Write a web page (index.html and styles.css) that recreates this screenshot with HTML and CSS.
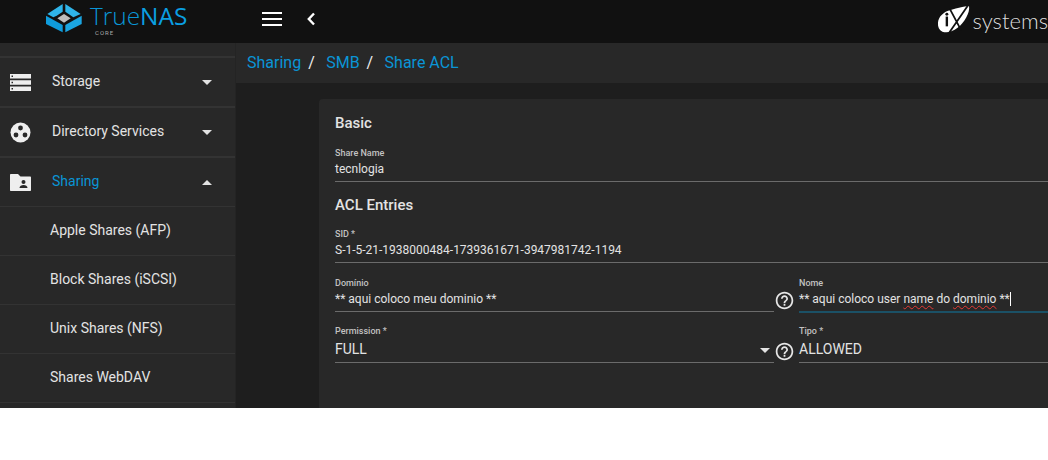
FILE: index.html
```html
<!DOCTYPE html>
<html lang="pt">
<head>
<meta charset="utf-8">
<title>TrueNAS</title>
<link rel="stylesheet" href="styles.css">
</head>
<body>
<div class="app">
  <header class="topbar">
    <div class="brand">
      <svg class="brand-mark" width="50" height="40" viewBox="0 0 150 120">
        <path fill="#2fb4e9" d="M22 42 68 12V35L50 47 40 52Z"/>
        <path fill="#2fb4e9" d="M76 12 122 42 100 52 76 35Z"/>
        <path fill="#0f9cdc" d="M18 47 68 75V97L18 72Z"/>
        <path fill="#1ba6e2" d="M125 47V72L76 97V75Z"/>
        <path fill="#bdbdbd" d="M72 42 92 55 72 68 52 55Z"/>
      </svg>
      <div class="brand-text">
        <div class="brand-name"><span class="brand-true">True</span><span class="brand-nas">NAS</span></div>
        <div class="brand-core">CORE</div>
      </div>
    </div>
    <div class="top-actions">
      <svg width="20" height="14" viewBox="0 0 20 14"><path fill="#fff" d="M0 0h20v2H0zM0 6h20v2H0zM0 12h20v2H0z"/></svg>
      <svg width="10" height="14" viewBox="0 0 10 14"><path fill="none" stroke="#fff" stroke-width="2.400" d="M8 1.500 2.800 7 8 12.500"/></svg>
    </div>
    <div class="ix">
      <svg width="40" height="36" viewBox="0 0 120 108">
        <path fill="#fff" d="M10 60C12 40 28 24 50 18L70 12C90 6 108 2 115 5 118 25 100 60 75 78 60 90 40 96 25 90 14 85 9 74 10 60Z"/>
        <circle cx="40" cy="31" r="5" fill="#111"/>
        <path fill="#111" d="M36 39h8v33h-8z"/>
        <path fill="none" stroke="#111" stroke-width="6" d="M50 13 88 85M110 3 46 96"/>
      </svg>
      <span class="ix-text">systems</span>
    </div>
  </header>
  <div class="main">
    <nav class="sidebar">
      <div class="nav-item">
        <svg class="nav-icon" width="21" height="17" viewBox="0 0 21 17"><path fill="#eee" d="M0 0h21v4.400H0zM0 6.300h21v4.400H0zM0 12.600h21V17H0z"/><path fill="#282828" d="M1.500 1.500h1.500v1.500H1.500zM1.500 7.800h1.500v1.500H1.500zM1.500 14.100h1.500v1.500H1.500z"/></svg>
        <span class="nav-label">Storage</span>
        <span class="caret-down"></span>
      </div>
      <div class="nav-item">
        <svg class="nav-icon" width="21" height="21" viewBox="0 0 21 21"><circle cx="10.500" cy="10.500" r="10" fill="#eee"/><circle cx="10.500" cy="6" r="2.400" fill="#282828"/><circle cx="6" cy="13" r="2.400" fill="#282828"/><circle cx="15" cy="13" r="2.400" fill="#282828"/></svg>
        <span class="nav-label">Directory Services</span>
        <span class="caret-down"></span>
      </div>
      <div class="nav-item nav-open">
        <svg class="nav-icon" width="21" height="17" viewBox="0 0 21 17"><path fill="#eee" d="M1 0h7l2.500 2.500H20c.6 0 1 .4 1 1V16c0 .6-.4 1-1 1H1c-.6 0-1-.4-1-1V1c0-.6.4-1 1-1Z"/><circle cx="13.500" cy="8" r="2" fill="#282828"/><path fill="#282828" d="M9.500 14c0-2 2-3 4-3s4 1 4 3z"/></svg>
        <span class="nav-label nav-active">Sharing</span>
        <span class="caret-up"></span>
      </div>
      <a class="sub-item">Apple Shares (AFP)</a>
      <a class="sub-item">Block Shares (iSCSI)</a>
      <a class="sub-item">Unix Shares (NFS)</a>
      <a class="sub-item">Shares WebDAV</a>
    </nav>
    <div class="content">
      <div class="crumbs">
        <a class="crumb">Sharing</a><span class="sep">/</span>
        <a class="crumb">SMB</a><span class="sep">/</span>
        <a class="crumb">Share ACL</a>
      </div>
      <div class="stage">
        <section class="card">
          <h2 class="section first">Basic</h2>
          <div class="field">
            <label class="label">Share Name</label>
            <div class="value">tecnlogia</div>
          </div>
          <h2 class="section">ACL Entries</h2>
          <div class="field">
            <label class="label">SID *</label>
            <div class="value">S-1-5-21-1938000484-1739361671-3947981742-1194</div>
          </div>
          <div class="row">
            <div class="cell">
              <div class="field">
                <label class="label">Domínio</label>
                <div class="value">** aqui coloco meu dominio **</div>
              </div>
              <svg class="help" width="21" height="21" viewBox="0 0 24 24"><path fill="#e6e6e6" d="M11 18h2v-2h-2v2zm1-16C6.480 2 2 6.480 2 12s4.480 10 10 10 10-4.480 10-10S17.520 2 12 2zm0 18c-4.410 0-8-3.590-8-8s3.590-8 8-8 8 3.590 8 8-3.590 8-8 8zm0-14c-2.210 0-4 1.790-4 4h2c0-1.100.9-2 2-2s2 .9 2 2c0 2-3 1.750-3 5h2c0-2.250 3-2.500 3-5 0-2.210-1.790-4-4-4z"/></svg>
            </div>
            <div class="cell">
              <div class="field focused">
                <label class="label">Nome</label>
                <div class="value">** aqui coloco user <span class="typo">name</span> do <span class="typo">dominio</span> **<span class="cursor"></span></div>
              </div>
            </div>
          </div>
          <div class="row row-select">
            <div class="cell">
              <div class="field select">
                <label class="label">Permission *</label>
                <div class="value large">FULL</div>
                <span class="select-arrow"></span>
              </div>
              <svg class="help" width="21" height="21" viewBox="0 0 24 24"><path fill="#e6e6e6" d="M11 18h2v-2h-2v2zm1-16C6.480 2 2 6.480 2 12s4.480 10 10 10 10-4.480 10-10S17.520 2 12 2zm0 18c-4.410 0-8-3.590-8-8s3.590-8 8-8 8 3.590 8 8-3.590 8-8 8zm0-14c-2.210 0-4 1.790-4 4h2c0-1.100.9-2 2-2s2 .9 2 2c0 2-3 1.750-3 5h2c0-2.250 3-2.500 3-5 0-2.210-1.790-4-4-4z"/></svg>
            </div>
            <div class="cell">
              <div class="field select">
                <label class="label">Tipo *</label>
                <div class="value large">ALLOWED</div>
              </div>
            </div>
          </div>
        </section>
      </div>
    </div>
  </div>
</div>
</body>
</html>
```
FILE: styles.css
```css
* { box-sizing: border-box; }
html, body { margin: 0; background: #fff; }
body { height: 460px; overflow: hidden; font-family: Roboto, "Liberation Sans", sans-serif; color: #e3e3e3; }
.app { width: 1048px; height: 408px; overflow: hidden; display: flex; flex-direction: column; background: #1e1e1e; }

.topbar { height: 43px; flex: none; display: flex; align-items: center; background: #111; }
.brand { width: 236px; height: 43px; flex: none; display: flex; align-items: flex-start; padding-left: 40px; }
.brand-mark { flex: none; }
.brand-text { display: flex; flex-direction: column; }
.brand-name { font-size: 24.400px; line-height: 26px; margin-top: 3px; color: #0a95d6; font-family: "Open Sans", sans-serif; white-space: nowrap; }
.brand-true { font-weight: 300; }
.brand-nas { font-weight: 400; color: #0a9fe2; }
.brand-core { font-size: 6px; line-height: 7px; letter-spacing: 1px; color: #aaa; margin-left: 5px; }
.top-actions { display: flex; align-items: center; gap: 24px; padding-left: 26px; margin-top: -5px; flex: 1; }
.ix { display: flex; align-items: center; width: 113px; flex: none; margin-top: -1px; overflow: hidden; }
.ix-text { font-family: Lato, sans-serif; font-weight: 300; font-size: 22px; line-height: 26px; color: #ddd; margin: -1px 0 0 2px; }

.main { flex: 1; min-height: 0; display: flex; }
.sidebar { width: 235px; flex: none; background: #282828; padding-top: 13px; box-shadow: 1px 0 0 #242424; }
.nav-item { height: 50px; display: flex; align-items: center; padding: 0 23px 0 10px; border-top: 2px solid #333; font-size: 14px; }
.nav-icon { flex: none; margin-right: 21px; }
.nav-label { flex: 1; color: #e3e3e3; padding-bottom: 2px; }
.nav-active { color: #0a95d6; }
.nav-open { border-bottom: 1px solid #333; height: 51px; }
.caret-down, .caret-up, .select-arrow { width: 0; height: 0; border-left: 5px solid transparent; border-right: 5px solid transparent; }
.caret-down, .select-arrow { border-top: 5px solid #e3e3e3; }
.caret-up { border-bottom: 5px solid #e3e3e3; }
.sub-item { display: flex; align-items: center; height: 49px; padding: 0 0 2px 50px; border-bottom: 1px solid #333; font-size: 14px; color: #e3e3e3; }

.content { flex: 1; min-width: 0; display: flex; flex-direction: column; margin-left: 1px; }
.crumbs { height: 40px; flex: none; display: flex; align-items: center; padding: 0 0 2px 11px; background: #282828; font-size: 16px; }
.crumb { color: #0a95d6; }
.sep { color: #eee; margin: 0 11.400px 0 7px; }
.stage { flex: 1; padding: 16px 0 0 83px; }
.card { height: 340px; background: #282828; border-radius: 4px 0 0 4px; padding: 16px 0 0 16px; }

.section { margin: 0; font-size: 15px; line-height: 16px; font-weight: 500; color: #e3e3e3; }
.section.first { margin-bottom: 13px; }
.section:not(.first) { margin: 15px 0 12px; }
.field { flex: 1; min-width: 0; height: 38px; padding-top: 3px; border-bottom: 1px solid #6b6b6b; position: relative; }
.select { height: 41px; }
.label { display: block; font-size: 9px; line-height: 12px; color: #c2c2c2; font-weight: 500; }
.value { font-size: 12px; line-height: 20px; color: #e3e3e3; }
.value.large { font-size: 14px; line-height: 24px; }
.row { display: flex; margin-top: 11px; }
.row-select { margin-top: 10px; }
.cell { flex: none; width: 464px; display: flex; align-items: flex-end; }
.cell:last-child { flex: 1; }
.help { flex: none; margin: 0 4px 1px 0; }
.focused { border-bottom-color: #1b5166; box-shadow: 0 1px 0 #1b5166; }
.typo { text-decoration: underline wavy #e53935 1px; text-underline-offset: 2px; }
.cursor { display: inline-block; width: 1px; height: 14px; background: #fff; vertical-align: -3px; }
.select-arrow { position: absolute; right: 4px; bottom: 9px; }
```
